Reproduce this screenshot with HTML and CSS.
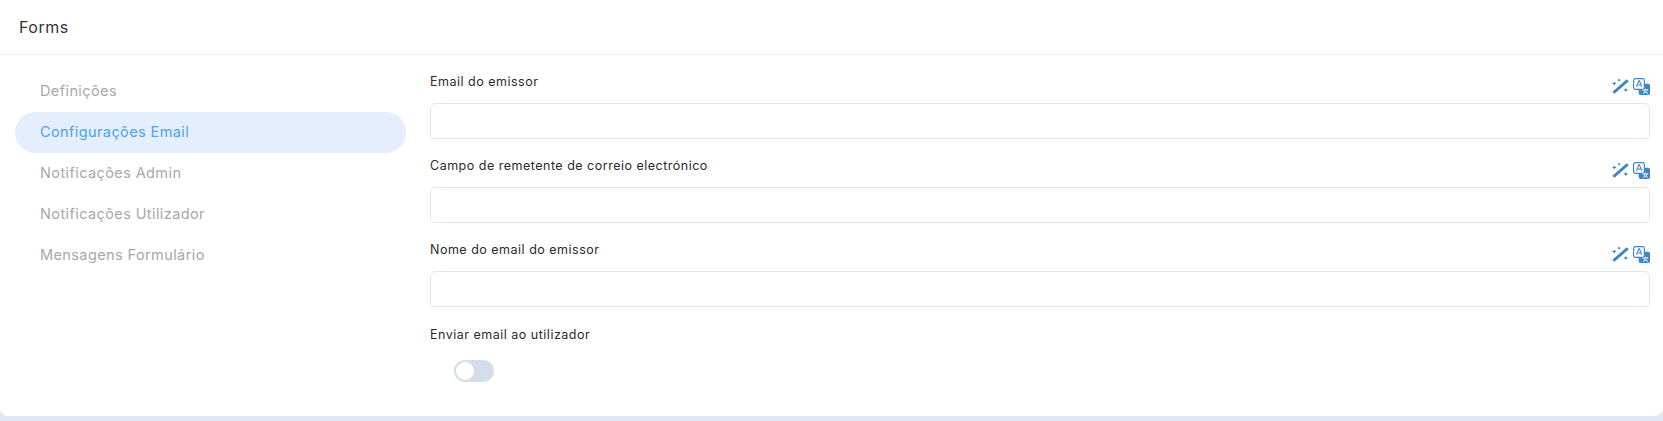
FILE: index.html
```html
<!DOCTYPE html>
<html lang="pt">
<head>
	<meta charset="UTF-8">
	<title>Forms</title>
	<link rel="stylesheet" href="styles.css">
</head>
<body>
	<svg class="defs" width="0" height="0">
		<defs>
			<symbol id="wand" viewBox="0 0 18 18">
				<path d="M15.6 1.2l2.2 2.2L2.6 16.8.4 14.6z" fill="#3d85c6"/>
				<path d="M2.4 3.4l.7 1.7 1.7.7-1.7.7-.7 1.7-.7-1.7L0 5.8l1.7-.7zM7.4.4l.6 1.2 1.2.6-1.2.6-.6 1.2-.6-1.2-1.2-.6 1.2-.6zM14.6 10.2l.7 1.8 1.8.7-1.8.7-.7 1.8-.7-1.8-1.8-.7 1.8-.7z" fill="#3d85c6"/>
			</symbol>
			<symbol id="translate" viewBox="0 0 18 18">
				<rect x="6" y="6" width="12" height="12" rx="2" fill="#3d85c6"/>
				<rect x="0.6" y="0.6" width="11.4" height="11.4" rx="2" fill="#fff" stroke="#3d85c6" stroke-width="1.2"/>
				<path d="M3.7 9.4L6.2 3h.6l2.5 6.4M4.6 7.4h3.8" fill="none" stroke="#3d85c6" stroke-width="1.1"/>
				<path d="M10 12.6h6M13 11.4v1.2M15 12.8c-.6 1.6-2.2 2.8-4.4 3.4M11.4 13c.6 1.4 2.2 2.6 4.4 3.2" fill="none" stroke="#fff" stroke-width="1"/>
			</symbol>
		</defs>
	</svg>

	<div class="card">
		<div class="card-header">Forms</div>
		<div class="card-body">
			<ul class="side-menu">
				<li>Definições</li>
				<li class="current">Configurações Email</li>
				<li>Notificações Admin</li>
				<li>Notificações Utilizador</li>
				<li>Mensagens Formulário</li>
			</ul>
			<div class="form">
				<div class="field">
					<div class="field-top">
						<label>Email do emissor</label>
						<span class="tools">
							<svg><use href="#wand"/></svg>
							<svg><use href="#translate"/></svg>
						</span>
					</div>
					<input type="text">
				</div>
				<div class="field">
					<div class="field-top">
						<label>Campo de remetente de correio electrónico</label>
						<span class="tools">
							<svg><use href="#wand"/></svg>
							<svg><use href="#translate"/></svg>
						</span>
					</div>
					<input type="text">
				</div>
				<div class="field">
					<div class="field-top">
						<label>Nome do email do emissor</label>
						<span class="tools">
							<svg><use href="#wand"/></svg>
							<svg><use href="#translate"/></svg>
						</span>
					</div>
					<input type="text">
				</div>
				<div class="field field-switch">
					<div class="field-top">
						<label>Enviar email ao utilizador</label>
					</div>
					<div class="switch"><span></span></div>
				</div>
			</div>
		</div>
	</div>
</body>
</html>
```

FILE: styles.css
```css
* {
	padding: 0;
	margin: 0;
	box-sizing: border-box;
}

ul {
	list-style: none;
}

html, body {
	height: 100%;
	overflow: hidden;
}

body {
	background-color: #e3e7f3;
	font-family: "Inter", "Liberation Sans", sans-serif;
}

.defs {
	position: absolute;
}

.card {
	height: 416px;
	background-color: #fff;
	border-radius: 0 0 8px 8px;
}

.card-header {
	height: 55px;
	padding: 17px 19px 0;
	font-size: 16px;
	line-height: 20px;
	letter-spacing: 0.5px;
	color: #333;
	border-bottom: 1px solid #eef2f8;
}

.card-body {
	display: flex;
	padding-top: 15px;
}

.side-menu {
	width: 391px;
	margin-left: 15px;
	margin-top: 1px;
}

.side-menu li {
	height: 41px;
	line-height: 40px;
	padding-left: 25px;
	font-size: 14.5px;
	letter-spacing: 0.4px;
	color: #a8a8a8;
	border-radius: 21px;
}

.side-menu li.current {
	background-color: #e5eefc;
	color: #4ba3f2;
}

.form {
	width: 1220px;
	margin-left: 24px;
}

.field {
	height: 84px;
}

.field-top {
	display: flex;
	justify-content: space-between;
	height: 33px;
	padding-top: 2px;
}

.field-top label {
	font-size: 12.5px;
	line-height: 20px;
	letter-spacing: 0.5px;
	color: #2b2b2b;
}

.tools {
	display: flex;
	gap: 4px;
	padding-top: 6px;
}

.tools svg {
	width: 17px;
	height: 17px;
}

.field input {
	display: block;
	width: 100%;
	height: 36px;
	border: 1px solid #dfe5f2;
	border-radius: 5px;
	background-color: #fff;
}

.field-switch {
	padding-top: 1px;
}

.switch {
	width: 40px;
	height: 22px;
	margin-left: 24px;
	margin-top: 4px;
	padding: 2px;
	background-color: #d5dcec;
	border-radius: 11px;
}

.switch span {
	display: block;
	width: 18px;
	height: 18px;
	background-color: #fff;
	border-radius: 50%;
}
```
